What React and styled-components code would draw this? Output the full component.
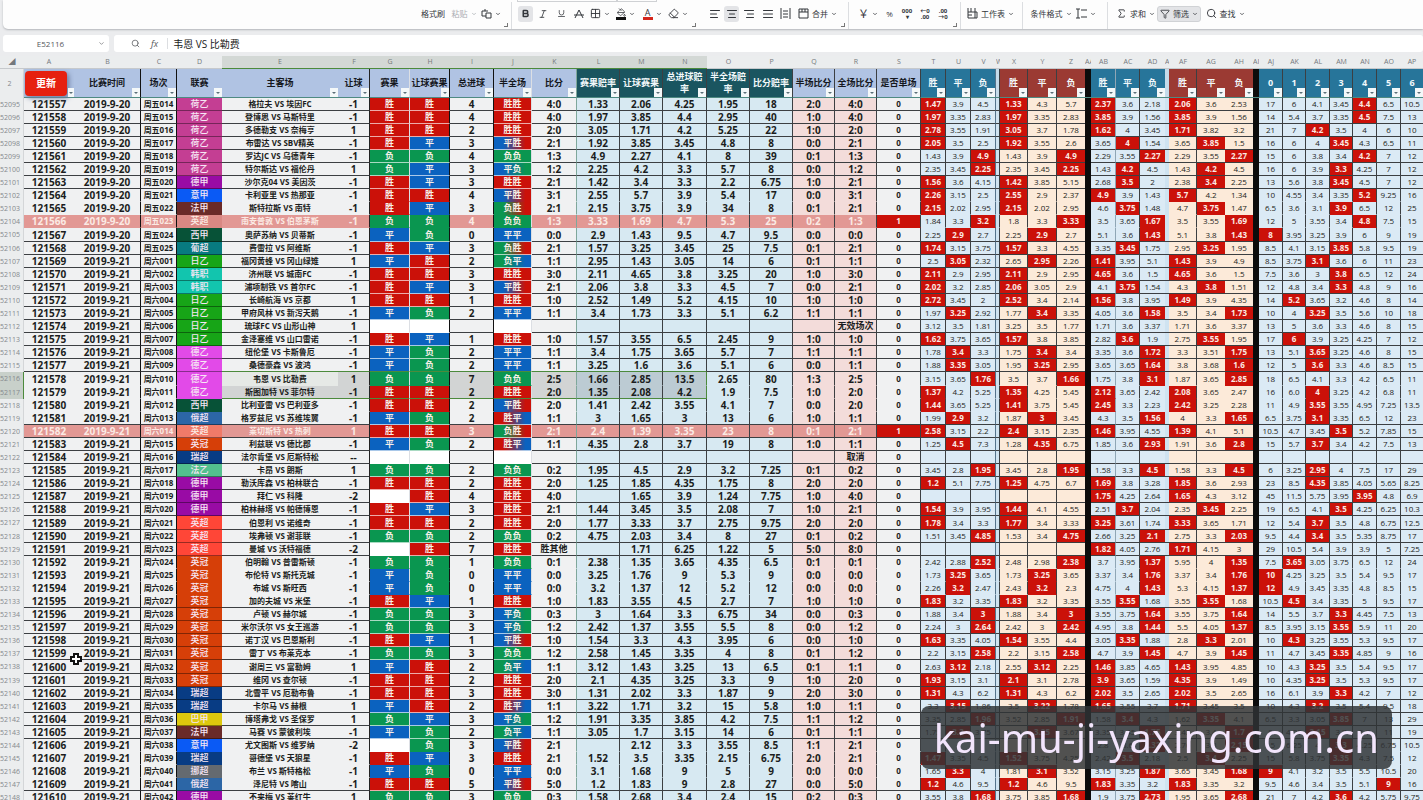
import styled, { createGlobalStyle, css } from 'styled-components';
import {
  AlignCenter,
  AlignJustify,
  AlignLeft,
  AlignRight,
  Bold,
  ChevronDown,
  Eraser,
  Filter,
  Grid2x2,
  Italic,
  PaintBucket,
  Search,
  Sigma,
  Underline,
} from 'lucide-react';

const DARK = '#3c3f42';
const GREEN = '#4c8a3c';

const columns = [
  { id: 'A', w: 50, kind: 'plain', title: '更新' },
  { id: 'B', w: 67, kind: 'plain', title: '比赛时间', line: '#111' },
  { id: 'C', w: 36, kind: 'small', title: '场次', line: '#111' },
  { id: 'D', w: 45, kind: 'league', title: '联赛' },
  { id: 'E', w: 116, kind: 'small', title: '主客场' },
  { id: 'F', w: 32, kind: 'plain', title: '让球', line: '#222' },
  { id: 'G', w: 40, kind: 'result', title: '赛果', line: '#dcdfe4' },
  { id: 'H', w: 40, kind: 'result', title: '让球赛果', line: '#111' },
  { id: 'I', w: 44, kind: 'plain', title: '总进球', line: '#111' },
  { id: 'J', w: 38, kind: 'result', title: '半全场', line: '#dcdfe4' },
  { id: 'K', w: 45, kind: 'plain', title: '比分', line: '#7fa79b' },
  { id: 'L', w: 43, kind: 'odds', title: '赛果赔率', line: DARK },
  { id: 'M', w: 43, kind: 'odds', title: '让球赛果', line: DARK },
  { id: 'N', w: 44, kind: 'odds', title: '总进球赔率', line: DARK },
  { id: 'O', w: 43, kind: 'odds', title: '半全场赔率', line: DARK },
  { id: 'P', w: 43, kind: 'odds', title: '比分赔率', line: DARK },
  { id: 'Q', w: 42, kind: 'score', title: '半场比分', line: DARK },
  { id: 'R', w: 42, kind: 'score', title: '全场比分', line: DARK },
  { id: 'S', w: 44, kind: 'single', title: '是否单场', line: DARK },
  { id: 'T', w: 25, kind: 'blue', title: '胜', line: DARK },
  { id: 'U', w: 25, kind: 'blue', title: '平', line: DARK },
  { id: 'V', w: 25, kind: 'blue', title: '负', line: '#55738a' },
  { id: 'W', w: 4, kind: 'gap', line: DARK },
  { id: 'X', w: 28, kind: 'peach', title: '胜', line: DARK },
  { id: 'Y', w: 29, kind: 'peach', title: '平', line: DARK },
  { id: 'Z', w: 28, kind: 'peach', title: '负' },
  { id: 'AA', w: 6, kind: 'black' },
  { id: 'AB', w: 25, kind: 'blue', title: '胜', line: '#8fa6b5' },
  { id: 'AC', w: 24, kind: 'blue', title: '平', line: DARK },
  { id: 'AD', w: 25, kind: 'blue', title: '负' },
  { id: 'AE', w: 4, kind: 'gap' },
  { id: 'AF', w: 28, kind: 'peach', title: '胜', line: DARK },
  { id: 'AG', w: 28, kind: 'peach', title: '平' },
  { id: 'AH', w: 28, kind: 'peach', title: '负' },
  { id: 'AI', w: 6, kind: 'black' },
  { id: 'AJ', w: 24, kind: 'blue', title: '0', line: DARK },
  { id: 'AK', w: 23, kind: 'blue', title: '1', line: DARK },
  { id: 'AL', w: 24, kind: 'blue', title: '2', line: DARK },
  { id: 'AM', w: 23, kind: 'blue', title: '3', line: DARK },
  { id: 'AN', w: 24, kind: 'blue', title: '4', line: DARK },
  { id: 'AO', w: 24, kind: 'blue', title: '5', line: DARK },
  { id: 'AP', w: 22, kind: 'blue', title: '6' },
];

const leagueColors = {
  荷乙: '#c43e93',
  德甲: '#990ba5',
  意甲: '#0a5af5',
  法甲: '#6a2a28',
  西甲: '#075237',
  葡超: '#087b80',
  日乙: '#17a517',
  韩职: '#12c5ae',
  德乙: '#e24ae8',
  俄超: '#2c66a6',
  英冠: '#d63f08',
  英超: '#ff4637',
  瑞超: '#083c84',
  法乙: '#53c08e',
  巴甲: '#ddc80d',
  挪超: '#646a70',
};

const resultColors = { 胜: '#cb1109', 平: '#0b62bf', 负: '#0a9650' };

// league | match | handicap | result | handicap result | goals | half/full | score | five odds | half score | final score
const matches = `
荷乙|格拉夫 VS 埃因FC|-1|胜|胜|4|胜胜|4:0|1.33 2.06 4.25 1.95 18|2:0|4:0
荷乙|登博思 VS 马斯特里|-1|胜|胜|4|胜胜|4:0|1.97 3.85 4.4 2.95 40|1:0|4:0
荷乙|多德勒支 VS 奈梅亨|1|胜|胜|2|胜胜|2:0|3.05 1.71 4.2 5.25 22|1:0|2:0
荷乙|布雷达 VS SBV精英|-1|胜|平|3|平胜|2:1|1.92 3.85 3.45 4.8 8|0:0|2:1
荷乙|罗达JC VS 乌德青年|-1|负|负|4|负负|1:3|4.9 2.27 4.1 8 39|0:1|1:3
荷乙|特尔斯达 VS 福伦丹|1|负|平|3|平负|1:2|2.25 4.2 3.3 5.7 8|0:0|1:2
德甲|沙尔克04 VS 美因茨|-1|胜|平|3|胜胜|2:1|1.42 3.4 3.3 2.2 6.75|1:0|2:1
意甲|卡利亚里 VS 热那亚|-1|胜|胜|4|平胜|3:1|2.55 5.7 3.9 5.4 17|0:0|3:1
法甲|斯特拉斯 VS 南特|-1|胜|平|3|负胜|2:1|2.15 3.75 3.9 34 8|0:1|2:1
英超|南安普敦 VS 伯恩茅斯|-1|负|负|4|负负|1:3|3.33 1.69 4.7 5.3 25|0:2|1:3
西甲|奥萨苏纳 VS 贝蒂斯|-1|平|负|0|平平|0:0|2.9 1.43 9.5 4.7 9.5|0:0|0:0
葡超|费雷拉 VS 阿维斯|-1|胜|平|3|负胜|2:1|1.57 3.25 3.45 25 7.5|0:1|2:1
日乙|福冈黄蜂 VS 冈山绿雉|1|平|胜|2|负平|1:1|2.95 1.43 3.05 14 6|0:1|1:1
韩职|济州联 VS 城南FC|-1|胜|胜|3|胜胜|3:0|2.11 4.65 3.8 3.25 20|1:0|3:0
韩职|浦项制铁 VS 首尔FC|-1|胜|平|3|平胜|2:1|2.06 3.8 3.3 4.5 7|0:0|2:1
日乙|长崎航海 VS 京都|1|胜|胜|1|胜胜|1:0|2.52 1.49 5.2 4.15 10|1:0|1:0
日乙|甲府风林 VS 新泻天鹅|-1|平|负|2|平平|1:1|3.4 1.73 3.3 5.1 6.2|1:1|1:1
日乙|琉球FC VS 山形山神|1||||||- - - - -||无效场次
日乙|金泽塞维 VS 山口雷诺|-1|胜|平|1|胜胜|1:0|1.57 3.55 6.5 2.45 9|1:0|1:0
德乙|纽伦堡 VS 卡斯鲁厄|-1|平|负|2|平平|1:1|3.4 1.75 3.65 5.7 7|1:1|1:1
德乙|桑德豪森 VS 波鸿|-1|平|负|2|平平|1:1|3.25 1.6 3.6 5.1 6|0:0|1:1
德乙|韦恩 VS 比勒费|1|负|负|7|负负|2:5|1.66 2.85 13.5 2.65 80|1:3|2:5
德乙|斯图加特 VS 菲尔特|-1|胜|胜|2|胜胜|2:0|1.35 2.08 4.2 1.9 7.5|1:0|2:0
西甲|比利亚雷 VS 巴利亚多|-1|胜|胜|2|平胜|2:0|1.41 2.42 3.55 4.1 7|0:0|2:0
俄超|格罗兹尼 VS 苏维埃翼|-1|平|负|2|胜平|1:1|3 1.65 3 13 6|1:0|1:1
英超|莱切斯特 VS 热刺|1|胜|胜|3|负胜|2:1|2.4 1.39 3.35 23 8|0:1|2:1
英冠|利兹联 VS 德比郡|-1|平|负|2|胜平|1:1|4.35 2.8 3.7 19 8|1:0|1:1
瑞超|法尔肯堡 VS 厄斯特松|--||||||- - - - -||取消
法乙|卡昂 VS 朗斯|1|负|负|2|负负|0:2|1.95 4.5 2.9 3.2 7.25|0:1|0:2
德甲|勒沃库森 VS 柏林联合|-1|胜|胜|2|胜胜|2:0|1.25 1.85 4.35 1.75 8|2:0|2:0
德甲|拜仁 VS 科隆|-2||胜|4|胜胜|4:0|- 1.65 3.9 1.24 7.75|1:0|4:0
德甲|柏林赫塔 VS 帕德博恩|-1|胜|平|3|胜胜|2:1|1.44 3.45 3.5 2.08 7|1:0|2:1
英超|伯恩利 VS 诺维奇|-1|胜|胜|2|胜胜|2:0|1.77 3.33 3.7 2.75 9.75|2:0|2:0
英超|埃弗顿 VS 谢菲联|-1|负|负|2|负负|0:2|4.75 2.03 3.4 8 27|0:1|0:2
英超|曼城 VS 沃特福德|-2||胜|7|胜胜|胜其他|- 1.71 6.25 1.22 5|5:0|8:0
英冠|伯明翰 VS 普雷斯顿|-1|负|负|1|负负|0:1|2.38 1.35 3.65 4.35 6.5|0:1|0:1
英冠|布伦特 VS 斯托克城|-1|平|负|0|平平|0:0|3.25 1.76 9 5.3 9|0:0|0:0
英冠|布城 VS 斯旺西|-1|平|负|0|平平|0:0|3.2 1.37 12 5.2 12|0:0|0:0
英冠|加的夫城 VS 米堡|-1|胜|平|1|胜胜|1:0|1.83 3.55 4.5 2.7 7|1:0|1:0
英冠|卢顿 VS 赫尔城|-1|负|负|3|平负|0:3|3 1.64 3.3 6.75 34|0:0|0:3
英冠|米尔沃尔 VS 女王巡游|-1|负|负|3|平负|1:2|2.42 1.37 3.55 5.5 8|0:0|1:2
英冠|诺丁汉 VS 巴恩斯利|-1|胜|平|1|平胜|1:0|1.54 3.3 4.3 3.95 6|0:0|1:0
英冠|雷丁 VS 布莱克本|-1|负|负|3|负负|1:2|2.58 1.45 3.35 4 8|0:1|1:2
英冠|谢周三 VS 富勒姆|1|平|胜|2|负平|1:1|3.12 1.43 3.25 13 6.5|0:1|1:1
英冠|维冈 VS 查尔顿|-1|胜|胜|2|胜胜|2:0|2.1 4.35 3.25 3.3 9|1:0|2:0
瑞超|北雪平 VS 厄勒布鲁|-1|胜|胜|3|胜胜|3:0|1.31 2.02 3.3 1.87 9|2:0|3:0
瑞超|卡尔马 VS 赫根|1|平|胜|2|胜平|1:1|3.22 1.71 3.2 15 5.8|1:0|1:1
巴甲|博塔弗戈 VS 圣保罗|1|负|平|3|平负|1:2|1.91 3.35 3.85 4.2 7.5|1:1|1:2
法甲|马赛 VS 蒙彼利埃|-1|平|负|2|负平|1:1|3.05 1.7 3.15 14 6|0:1|1:1
意甲|尤文图斯 VS 维罗纳|-2||负|3|平胜|2:1|- 2.12 3.3 3.55 8.5|1:1|2:1
瑞超|哥德堡 VS 天狼星|-1|胜|平|3|胜胜|2:1|1.52 3.5 3.35 2.15 6.75|2:0|2:1
挪超|布兰 VS 斯特格松|-1|平|负|0|平平|0:0|3.1 1.68 9 5 9|0:0|0:0
俄超|泽尼特 VS 喀山|-1|胜|胜|5|平胜|5:0|1.2 1.83 9 2.8 27|0:0|5:0
德甲|不来梅 VS 莱红牛|1|负|负|3|负负|0:3|1.58 2.68 3.4 2.4 15|0:2|0:3
`.trim().split('\n').map((line) => line.split('|'));

// columns T-V, X-Z, AB-AD, AF-AH, AJ-AP; a star marks the outcome that came in
const rates = `
*1.47 3.9 4.5|*1.33 4.3 5.7|*2.37 3.6 2.18|*2.06 3.6 2.53|17 6 4.1 3.45 *4.4 6.5 10.5
*1.97 3.35 2.83|*1.97 3.35 2.83|*3.85 3.9 1.56|*3.85 3.9 1.56|14 5.4 3.7 3.35 *4.5 7.5 13
*2.78 3.55 1.91|*3.05 3.7 1.78|*1.62 4 3.45|*1.71 3.82 3.2|21 7 *4.2 3.5 4 6 10
*2.05 3.5 2.5|*1.92 3.55 2.6|3.65 *4 1.54|3.65 *3.85 1.5|16 6 4 *3.45 4.3 6.5 11
1.43 3.9 *4.9|1.43 3.9 *4.9|2.29 3.55 *2.27|2.29 3.55 *2.27|15 6 3.8 3.4 *4.2 7 12
2.35 3.45 *2.25|2.35 3.45 *2.25|1.43 *4.2 4.5|1.43 *4.2 4.5|16 6 3.9 *3.3 4.25 7 12
*1.56 3.6 4.15|*1.42 3.85 5.15|2.68 *3.5 2|2.38 *3.4 2.25|13 5.6 3.8 *3.45 4.5 7 12
*2.26 3.15 2.5|*2.55 2.9 2.37|*4.9 3.9 1.43|*5.7 4.2 1.34|10 4.55 3.4 3.35 *5.2 9.25 16
*2.15 2.02 2.95|*2.15 2.02 2.95|4.6 *3.75 1.48|4.7 *3.75 1.47|6.5 3.6 3.1 *3.9 6.5 12 25
1.84 3.3 *3.2|1.8 3.3 *3.33|3.5 3.65 *1.67|3.5 3.55 *1.69|12 5 3.55 3.4 *4.8 7.5 15
2.25 *2.9 2.7|2.25 *2.9 2.7|5.1 3.6 *1.43|5.1 3.8 *1.43|*8 3.95 3.25 3.9 6 9 19
*1.74 3.15 3.75|*1.57 3.3 4.55|3.35 *3.45 1.75|2.95 *3.25 1.95|8.5 4.1 3.15 *3.85 5.8 9.5 19
2.5 *3.05 2.32|2.65 *2.95 2.26|*1.41 3.95 5.1|*1.43 3.9 4.9|8.5 3.75 *3.1 3.6 6 11 23
*2.11 2.9 2.95|*2.11 2.9 2.95|*4.65 3.6 1.5|*4.65 3.6 1.5|7.5 3.6 3 *3.8 6.5 12 24
*2.02 3.2 2.85|*2.06 3.05 2.9|4.1 *3.75 1.54|4.3 *3.8 1.51|12 4.8 3.4 *3.3 4.8 9 16
*2.72 3.45 2|*2.52 3.4 2.14|*1.56 3.8 3.95|*1.49 3.9 4.35|14 *5.2 3.65 3.2 4.6 8 14
1.97 *3.25 2.92|1.77 *3.4 3.35|4.05 3.6 *1.58|3.5 3.4 *1.73|10 4 *3.25 3.5 5.6 10 18
3.12 3.5 1.81|3.25 3.5 1.77|1.71 3.6 3.37|1.71 3.6 3.37|13 5 3.6 3.3 4.6 8 15
*1.62 3.75 3.65|*1.57 3.8 3.85|2.82 *3.6 1.9|2.75 *3.55 1.95|17 *6 3.9 3.25 4.25 7 12
1.78 *3.4 3.3|1.75 *3.4 3.4|3.35 3.6 *1.72|3.3 3.51 *1.75|13 5.1 *3.65 3.25 4.6 8 15
1.88 *3.35 3.05|1.95 *3.25 2.95|3.65 3.65 *1.64|3.8 3.68 *1.6|12 5 *3.6 3.3 4.6 8.5 15
3.15 3.65 *1.76|3.5 3.7 *1.66|1.75 3.8 *3.1|1.87 3.65 *2.85|18 6.5 4.1 3.3 4.2 6.5 11
*1.37 4.2 5.25|*1.35 4.25 5.45|*2.12 3.65 2.42|*2.08 3.65 2.47|16 6.0 *4 3.25 4.2 6.8 11
*1.44 3.65 5.25|*1.41 3.75 5.45|*2.45 3.3 2.23|*2.42 3.25 2.28|11 4.9 *3.55 3.55 4.95 7.25 13.5
1.99 *2.9 3.2|1.87 *3 3.45|4.3 3.5 *1.56|4 3.3 *1.65|6.5 3.75 *3.1 3.35 6.5 12 23
*2.58 3.15 2.2|*2.4 3.15 2.35|*1.46 3.95 4.55|*1.39 4.1 5.1|10.5 4.7 3.45 *3.5 5.2 7.85 15
1.25 *4.5 7.3|1.28 *4.35 6.75|1.85 3.6 *2.93|1.91 3.6 *2.8|15 5.7 *3.7 3.4 4.2 7.5 13
- - -|- - -|- - -|- - -|- - - - - - -
3.45 2.8 *1.95|3.45 2.8 *1.95|1.58 3.3 *4.5|1.58 3.3 *4.5|6 3.25 *2.95 4 7.5 17 29
*1.2 5.1 7.75|*1.25 4.75 6.7|*1.69 3.8 3.28|*1.85 3.6 2.93|23 8.5 *4.35 3.85 4.05 5.65 8.25
- - -|- - -|*1.75 4.25 2.64|*1.65 4.3 3.12|45 11.5 5.75 3.95 *3.95 4.8 6.9
*1.54 3.9 3.95|*1.44 4.1 4.55|2.51 *3.7 2.04|2.35 *3.45 2.25|19 6.5 4.1 *3.5 4.25 6.25 10.3
*1.78 3.4 3.3|*1.77 3.4 3.33|*3.25 3.61 1.74|*3.33 3.65 1.71|12 5.4 *3.7 3.5 4.8 6.75 12.5
1.51 3.45 *4.85|1.53 3.4 *4.75|2.66 3.25 *2.1|2.75 3.3 *2.03|9.5 4.4 *3.4 3.5 5.35 8.75 17
- - -|- - -|*1.82 4.05 2.76|*1.71 4.15 3|29 10.5 5.4 3.9 3.9 5 7.25
2.42 2.88 *2.52|2.48 2.98 *2.38|3.7 3.95 *1.37|5.95 4 *1.35|7.5 *3.65 3.05 3.75 6.5 12 24
1.73 *3.25 3.65|1.73 *3.25 3.65|3.37 3.4 *1.76|3.37 3.4 *1.76|*10 4.25 3.25 3.5 5.4 9.5 17
2.26 *3.2 2.47|2.43 *3.2 2.3|4.75 4 *1.43|5.3 4.15 *1.37|*12 4.9 3.45 3.35 4.8 8.5 15
*1.83 3.2 3.35|*1.83 3.2 3.35|3.55 *3.55 1.68|3.55 *3.55 1.68|10.5 *4.5 3.4 3.35 5 9.5 17
1.88 3.4 *3|1.88 3.4 *3|3.55 3.75 *1.64|3.55 3.75 *1.64|14 5.5 3.7 *3.3 4.45 7.5 13
2.24 3 *2.64|2.42 3 *2.42|4.95 3.8 *1.44|5.5 4.05 *1.37|8.5 3.95 3.15 *3.55 5.9 11 20
*1.63 3.35 4.05|*1.54 3.55 4.4|3.05 *3.35 1.88|2.8 *3.3 2.01|10 *4.3 3.25 3.55 5.3 9.5 17
2.2 3.15 *2.58|2.2 3.15 *2.58|4.7 3.9 *1.45|4.7 3.9 *1.45|11 4.7 3.45 *3.35 4.85 9 16
2.63 *3.12 2.18|2.55 *3.12 2.25|*1.46 3.85 4.65|*1.43 3.95 4.85|10 4.3 *3.25 3.5 5.4 9.5 17
*1.93 3.15 3.1|*2.1 3.1 2.78|*3.9 3.65 1.59|*4.35 3.9 1.49|10 4.35 *3.25 3.5 5.3 9.5 17
*1.31 4.3 6.2|*1.31 4.3 6.2|*2.02 3.5 2.65|*2.02 3.5 2.65|16 6.1 3.9 *3.3 4.2 7 12
3.3 *3.15 1.86|3.5 *3.22 1.78|*1.65 3.55 3.7|*1.71 3.45 3.5|10 4.3 *3.2 3.5 5.4 9.5 18
3.35 2.85 *1.96|3.52 2.85 *1.91|1.58 *3.4 4.3|1.62 *3.35 4.1|6.5 3.3 3.05 *3.85 7 13 29
1.75 *3.3 3.75|1.79 *3.25 3.67|3.35 3.45 *1.75|3.42 3.4 *1.7|8 4.05 *3.15 3.7 5.7 11 19
- - -|- - -|2.8 3.6 *2.32|2.76 3.3 *2.15|15 6.25 4 *3.3 4.25 6.75 10.5
*1.47 3.35 4.5|*1.52 3.75 4.25|2.42 *3.5 2.18|2.5 *3.4 2.25|15 5.8 3.75 *3.35 4.3 7.5 12
1.65 *3.3 4|1.81 *3.1 3.52|3.15 3.25 *1.87|3.65 3.45 *1.68|*9 4.1 3.2 3.5 5.5 10.5 20
*1.2 4.6 9.5|*1.2 4.6 9.5|*1.83 3.35 3.2|*1.83 3.35 3.2|9.5 4.6 3.4 3.5 5.1 *9 16
3.55 3.8 *1.68|3.75 3.85 *1.68|1.9 3.75 *2.73|1.95 3.65 *2.68|21 7 4.2 *3.6 4.2 5.75 9.75
`.trim().split('\n').map((line) => line.split('|').map((part) => part.split(' ')));

const rows = matches.map((m, i) => {
  const [league, teams, handicap, result, handicapResult, goals, half, score, odds, halfScore, finalScore] = m;
  const [first, second, third, fourth, totals] = rates[i];
  const friday = i < 12;
  const marked = i === 9 || i === 25;
  const day = (friday ? '周五' : '周六') + String(friday ? i + 14 : i - 11).padStart(3, '0');
  return {
    number: 52095 + i,
    marked,
    selected: i === 21 || i === 22,
    cells: [
      String(121557 + i), friday ? '2019-9-20' : '2019-9-21', day, league, teams, handicap,
      result, handicapResult, goals, half, score, ...odds.split(' '), halfScore, finalScore, marked ? '1' : '0',
      ...first, '', ...second, '', ...third, '', ...fourth, '', ...totals,
    ],
  };
});

const isSelectedColumn = (index) => index >= 4 && index <= 13;

const cellBackground = (kind, text, row, index) => {
  if (kind === 'league') {
    if (row.number === 52104) return '#d98883';
    if (row.marked) return '#f07a68';
    return leagueColors[text];
  }
  if (kind === 'result') {
    if (!text) return '#fff';
    if (text.length === 1 || text[0] === text[1]) return resultColors[text[0]];
    return `linear-gradient(90deg, ${resultColors[text[0]]} 25%, ${resultColors[text[1]]} 85%)`;
  }
  if (row.marked && kind === 'single') return resultColors['胜'];
  if (row.marked && index < 18) return '#e29894';
  if (row.selected && isSelectedColumn(index)) {
    if (kind === 'odds') return '#bccbd3';
    return row.number === 52116 && index === 4 ? '#e6e9e6' : '#d2d4d4';
  }
  if (text.startsWith('*')) return '#cb1109';
  return null;
};

const Chevron = () => <ChevronDown size={6} strokeWidth={3} />;

export default function App() {
  return (
    <SPage>
      <GlobalStyle />
      <SRibbon>
        <SUpperRow>
          <SFontBox $wide />
          <SFontBox />
        </SUpperRow>
        <STools>
          <SGroup>
            <STool $w={32}>格式刷</STool>
            <STool $w={30} $muted>粘贴<Chevron /></STool>
            <STool $w={24} aria-label="复制">
              <svg width="11" height="12" viewBox="0 0 11 12"><path d="M4 1v2H1v5h2M4 3h3M5 5h5v5H5zM3 8h2" /></svg>
              <Chevron />
            </STool>
            <SLauncher />
          </SGroup>
          <SGroup>
            <STool $w={15} $active aria-label="加粗"><Bold size={9} strokeWidth={4} /></STool>
            <STool $w={20} aria-label="倾斜"><Italic size={10} /></STool>
            <STool $w={17} aria-label="下划线"><Underline size={9} /></STool>
            <STool $w={18} aria-label="删除线">
              <svg width="10" height="10" viewBox="0 0 10 10"><path d="M1 9l4-8 4 8M0 6h10" /></svg>
            </STool>
            <STool $w={24} aria-label="边框"><Grid2x2 size={11} /><Chevron /></STool>
            <STool $w={27} aria-label="填充"><SInk $color="#111"><PaintBucket size={9} /></SInk><Chevron /></STool>
            <STool $w={26} aria-label="字色"><SInk $color="#d4261c">A</SInk><Chevron /></STool>
            <STool $w={26} aria-label="清除"><Eraser size={11} /><Chevron /></STool>
            <SLauncher />
          </SGroup>
          <SGroup $plain>
            <STool $w={18} aria-label="左对齐"><AlignLeft size={12} /></STool>
            <STool $w={15} $active aria-label="居中"><AlignCenter size={12} /></STool>
            <STool $w={20} aria-label="右对齐"><AlignRight size={12} /></STool>
            <STool $w={17} aria-label="两端对齐"><AlignJustify size={12} /></STool>
            <STool $w={19} aria-label="分散对齐">
              <svg width="11" height="11" viewBox="0 0 11 11"><path d="M1 0v11M10 0v11M3 3h5M3 6h5M3 9h5" /></svg>
            </STool>
            <STool $w={45}>
              <svg width="11" height="11" viewBox="0 0 11 11"><path d="M1 1h9v9H1zM1 4h9M4 1v3M7 1v3" /></svg>
              合并<Chevron />
            </STool>
            <SLauncher />
          </SGroup>
          <SGroup>
            <STool $w={26} $large>￥<Chevron /></STool>
            <STool $w={17}>%</STool>
            <SDigits>000<br />▾</SDigits>
            <SDigits>←0<br />.00</SDigits>
            <SDigits>.00<br />→0</SDigits>
            <SLauncher />
          </SGroup>
          <SGroup>
            <STool $w={47}>
              <svg width="11" height="11" viewBox="0 0 11 11"><path d="M1 0v10h9V4H1M4 0v4M8 0v10M1 7h4" /></svg>
              工作表<Chevron />
            </STool>
          </SGroup>
          <SGroup>
            <STool $w={44}>条件格式<Chevron /></STool>
            <STool $w={26} aria-label="行和列">
              <svg width="11" height="11" viewBox="0 0 11 11"><path d="M2 1v9M0 1h4M0 10h4M5 2h6M5 9h6" /></svg>
              <Chevron />
            </STool>
          </SGroup>
          <SGroup>
            <STool $w={43}><Sigma size={11} />求和<Chevron /></STool>
            <STool $w={44} $active $framed><Filter size={10} />筛选<Chevron /></STool>
            <STool $w={48}><Search size={11} />查找<Chevron /></STool>
          </SGroup>
        </STools>
      </SRibbon>
      <SFormulaBar>
        <SNameBox>
          <SNameInput aria-label="名称框" defaultValue="E52116" />
          <ChevronDown size={7} />
        </SNameBox>
        <SFormulaBox>
          <Search size={9} />
          <SFx>fx</SFx>
          <SFormulaInput aria-label="编辑栏" defaultValue="韦恩 VS 比勒费" />
        </SFormulaBox>
      </SFormulaBar>
      <SSheet>
        <STable>
          <colgroup>
            <SCol $w={24} />
            {columns.map((column) => <SCol key={column.id} $w={column.w} />)}
          </colgroup>
          <thead>
            <tr>
              <SLetter>◢</SLetter>
              {columns.map((column, index) => (
                <SLetter key={column.id} $selected={isSelectedColumn(index)}>{column.id}</SLetter>
              ))}
            </tr>
            <tr>
              <SRowNumber>2</SRowNumber>
              {columns.map((column) => (
                <STitle key={column.id} $kind={column.kind} $line={column.line}>
                  {column.id === 'A' ? <SUpdateButton>更新</SUpdateButton> : column.title}
                  {column.title && <SFilterButton aria-label={`筛选${column.title}`} $narrow={column.id === 'A'} />}
                </STitle>
              ))}
            </tr>
          </thead>
          <tbody>
            {rows.map((row) => (
              <SRow key={row.number}>
                <SRowNumber $selected={row.selected}>{row.number}</SRowNumber>
                {columns.map((column, index) => {
                  const text = row.cells[index];
                  return (
                    <SCell
                      key={column.id}
                      $kind={column.kind}
                      $line={row.selected && column.id === 'N' ? GREEN : column.line}
                      $bg={cellBackground(column.kind, text, row, index)}
                      $light={text.startsWith('*') || (row.marked && index < 19)}
                      $note={text === '无效场次' || text === '取消' || text === '胜其他'}
                      $edge={isSelectedColumn(index) && (row.number === 52115 || row.number === 52117)}
                    >
                      {text === '-' ? '' : text.replace('*', '')}
                    </SCell>
                  );
                })}
              </SRow>
            ))}
          </tbody>
        </STable>
        <SCursor width="12" height="12" viewBox="0 0 12 12">
          <path d="M4 1h4v3h3v4H8v3H4V8H1V4h3z" />
        </SCursor>
      </SSheet>
      <SWatermark>kai-mu-ji-yaxing.com.cn</SWatermark>
    </SPage>
  );
}

const GlobalStyle = createGlobalStyle`
  * {
    box-sizing: border-box;
  }

  body {
    margin: 0;
    background: #ebecee;
    font-family: 'Open Sans', 'Noto Sans CJK SC', sans-serif;
  }

  button,
  input {
    padding: 0;
    border: 0;
    background: none;
    color: inherit;
    font: inherit;
  }
`;

const SPage = styled.div`
  display: flex;
  flex-direction: column;
  height: 100vh;
  overflow: hidden;
`;

const SRibbon = styled.header`
  flex: none;
  margin-left: 3px;
  padding-left: 414px;
  background: #fdfdfd;
  border-bottom-left-radius: 5px;
  box-shadow: 0 1px 2px #b4b6ba;
`;

const SUpperRow = styled.div`
  display: flex;
  height: 2px;
  padding-left: 100px;
`;

const SFontBox = styled.div`
  width: ${(props) => (props.$wide ? 100 : 40)}px;
  border: 1px solid #cfd1d4;
  border-top: 0;
`;

const STools = styled.div`
  display: flex;
  height: 27px;
`;

const SGroup = styled.div`
  position: relative;
  display: flex;
  align-items: center;
  padding: 0 8px 4px 6px;
  border-left: 1px solid ${(props) => (props.$plain ? 'transparent' : '#dcdee1')};

  &:first-child {
    padding-left: 0;
    border-left: 0;
  }
`;

const STool = styled.button`
  display: flex;
  align-items: center;
  justify-content: center;
  gap: 3px;
  flex: none;
  width: ${(props) => props.$w}px;
  height: 16px;
  border: 1px solid ${(props) => (props.$framed ? '#d0d2d5' : 'transparent')};
  border-radius: 3px;
  background: ${(props) => (props.$active ? '#e3e4e7' : 'none')};
  color: ${(props) => (props.$muted ? '#aaadb2' : '#33363b')};
  font-size: ${(props) => (props.$large ? 11 : 8)}px;
  line-height: 12px;
  white-space: nowrap;

  svg {
    flex: none;
    fill: none;
    stroke: currentColor;
  }
`;

const SInk = styled.span`
  display: flex;
  justify-content: center;
  width: 10px;
  height: 12px;
  border-bottom: 3px solid ${(props) => props.$color};
  font-size: 9px;
  line-height: 9px;
`;

const SDigits = styled.button`
  width: 18px;
  color: #33363b;
  font-size: 6px;
  font-weight: bold;
  line-height: 6px;
`;

const SLauncher = styled.i`
  position: absolute;
  right: 3px;
  bottom: 2px;
  width: 4px;
  height: 4px;
  border: solid #777;
  border-width: 0 1px 1px 0;
`;

const SFormulaBar = styled.div`
  display: flex;
  flex: none;
  gap: 5px;
  padding: 6px 0 4px 3px;
`;

const SNameBox = styled.div`
  display: flex;
  align-items: center;
  width: 106px;
  height: 17px;
  padding-right: 4px;
  border-radius: 3px;
  background: #fff;
  color: #55585c;
`;

const SNameInput = styled.input`
  flex: 1;
  min-width: 0;
  font-size: 8px;
  text-align: center;
`;

const SFormulaBox = styled.div`
  display: flex;
  align-items: center;
  flex: 1;
  padding-left: 17px;
  border-radius: 3px;
  background: #fff;
  color: #55585c;
`;

const SFx = styled.i`
  margin-left: 11px;
  padding-right: 9px;
  border-right: 1px solid #dcdee1;
  font-size: 9px;
  line-height: 11px;
`;

const SFormulaInput = styled.input`
  flex: 1;
  padding-left: 5px;
  color: #222;
  font-size: 10px;
`;

const SSheet = styled.main`
  position: relative;
  flex: 1;
  overflow: hidden;
`;

const STable = styled.table`
  width: 100%;
  border-spacing: 0;
  table-layout: fixed;
`;

const SCol = styled.col`
  width: ${(props) => props.$w}px;
`;

const SLetter = styled.th`
  height: 13px;
  padding: 0;
  overflow: hidden;
  border-bottom: 1px solid ${(props) => (props.$selected ? GREEN : '#c6c9cc')};
  background: ${(props) => (props.$selected ? '#d3d8d5' : '#ebedee')};
  color: #74787c;
  font-size: 7px;
  font-weight: normal;
  line-height: 12px;
`;

const SRowNumber = styled.th`
  padding: 0 4px 0 0;
  overflow: hidden;
  border-right: 1px solid ${(props) => (props.$selected ? GREEN : '#d4d6d8')};
  background: ${(props) => (props.$selected ? '#c8d0ca' : '#ebedee')};
  color: #85898d;
  font-size: 7px;
  font-weight: normal;
  line-height: 12px;
  text-align: center;
`;

const titleColors = {
  odds: '#1a5560',
  blue: '#27759a',
  peach: '#9b3a33',
  gap: '#c4dbea',
  black: '#0c0c0c',
};

const STitle = styled.th`
  position: relative;
  height: 29px;
  padding: 0 1px;
  border-right: ${(props) => (props.$line ? `1px solid ${props.$line}` : 0)};
  border-bottom: 1px solid #4e8a82;
  background: ${(props) => titleColors[props.$kind] || '#b0c3e3'};
  color: ${(props) => (titleColors[props.$kind] ? '#f2f8fa' : '#15181d')};
  font-size: 9px;
  line-height: 12px;
  overflow-wrap: anywhere;
`;

const SUpdateButton = styled.button`
  display: block;
  width: 42px;
  height: 25px;
  border-radius: 4px;
  background: #e6200f;
  box-shadow: 2px 2px 5px #6d7ea0;
  color: #fff;
  font-size: 10px;
`;

const SFilterButton = styled.button`
  position: absolute;
  right: 0;
  bottom: 0;
  display: flex;
  align-items: center;
  justify-content: center;
  width: ${(props) => (props.$narrow ? 6 : 8)}px;
  height: 9px;
  background: #f4f8f9;

  &::after {
    border: 2px solid transparent;
    border-top-color: #5a6f78;
    border-bottom: 0;
    content: '';
  }
`;

// rows are a little over 13px tall and some grid lines drop out at this zoom level
const SRow = styled.tr`
  height: 13px;

  &:nth-child(11n) {
    height: 14px;
  }

  &:nth-child(14n + 8) > td,
  &:nth-child(14n + 9) > td,
  &:nth-child(14n + 10) > td {
    border-bottom-color: transparent;
  }
`;

const cellKinds = {
  plain: css`
    font-size: 10px;
  `,
  small: css`
    font-size: 8px;
  `,
  league: css`
    border-bottom-color: rgba(0, 0, 0, 0.4);
    color: #f6e6f4;
    font-size: 9px;
    font-weight: 500;
  `,
  result: css`
    border-bottom-color: rgba(255, 255, 255, 0.65);
    color: #f6efe8;
    font-size: 9px;
  `,
  odds: css`
    background: #d7e9f2;
    font-size: 10px;
  `,
  score: css`
    background: #f3dcda;
    font-size: 10px;
  `,
  single: css`
    font-size: 8px;
  `,
  blue: css`
    background: #dbeaf5;
    font-size: 8px;
    font-weight: ${(props) => (props.$light ? 'bold' : 500)};
  `,
  peach: css`
    background: #fcead9;
    font-size: 8px;
    font-weight: ${(props) => (props.$light ? 'bold' : 500)};
  `,
  gap: css`
    background: #cfe3f1;
  `,
  black: css`
    border-bottom-color: #0c0c0c;
    background: #0c0c0c;
  `,
};

const SCell = styled.td`
  padding: 0;
  overflow: hidden;
  border-right: ${(props) => (props.$line ? `1px solid ${props.$line}` : 0)};
  border-bottom: 1px solid ${DARK};
  background: #f0f1f2;
  color: #1b1d20;
  font-weight: bold;
  line-height: 12px;
  text-align: center;
  white-space: nowrap;
  ${(props) => cellKinds[props.$kind]}
  ${(props) => props.$bg && css`background: ${props.$bg};`}
  ${(props) => props.$light && css`color: #fbeae4;`}
  ${(props) => props.$note && css`font-size: 9px;`}
  ${(props) => props.$edge && css`border-bottom-color: ${GREEN} !important;`}
`;

const SCursor = styled.svg`
  position: absolute;
  top: 597px;
  left: 70px;
  fill: #fff;
  stroke: #111;
  stroke-width: 2;
`;

const SWatermark = styled.div`
  position: fixed;
  right: 31px;
  bottom: 31px;
  padding: 0 13px;
  border-radius: 8px;
  background: rgba(48, 51, 54, 0.84);
  color: #f2e5fc;
  font-family: 'Noto Sans', sans-serif;
  font-size: 40px;
  line-height: 63px;
`;
